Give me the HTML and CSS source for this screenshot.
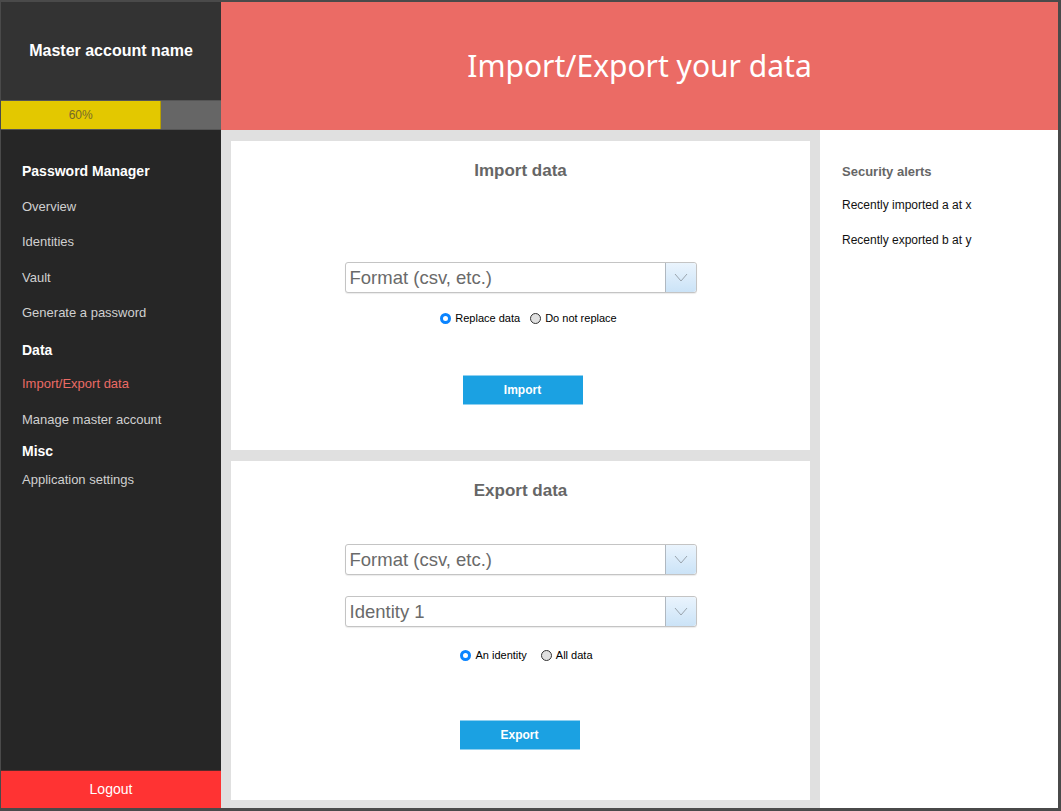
FILE: index.html
```html
<!DOCTYPE html>
<html>
<head>
<meta charset="utf-8">
<link rel="stylesheet" href="styles.css">
</head>
<body>
<div class="app">
  <aside class="sidebar">
    <div class="account">Master account name</div>
    <div class="progress">
      <div class="progress-fill" style="width:72.9%">60%</div>
    </div>
    <nav class="nav">
      <div class="nav-row nav-head">Password Manager</div>
      <div class="nav-row">Overview</div>
      <div class="nav-row">Identities</div>
      <div class="nav-row">Vault</div>
      <div class="nav-row">Generate a password</div>
      <div class="nav-row nav-head nav-data">Data</div>
      <div class="nav-row active">Import/Export data</div>
      <div class="nav-row">Manage master account</div>
      <div class="nav-row nav-head nav-short">Misc</div>
      <div class="nav-row nav-last">Application settings</div>
    </nav>
    <div class="logout">Logout</div>
  </aside>
  <div class="content">
    <header class="header">Import/Export your data</header>
    <div class="body">
      <main class="cards">
        <section class="card card-import">
          <h2 class="card-title">Import data</h2>
          <div class="select sel-import">
            <span class="select-text">Format (csv, etc.)</span>
            <span class="select-btn"><svg width="14" height="9" viewBox="0 0 14 9"><path d="M1 1 L7 8 L13 1" fill="none" stroke="#9aa4ad" stroke-width="1"/></svg></span>
          </div>
          <div class="radios radios-import">
            <label class="radio"><span class="dot on"></span>Replace data</label>
            <label class="radio"><span class="dot"></span>Do not replace</label>
          </div>
          <button class="btn btn-import">Import</button>
        </section>
        <section class="card card-export">
          <h2 class="card-title">Export data</h2>
          <div class="select sel-export1">
            <span class="select-text">Format (csv, etc.)</span>
            <span class="select-btn"><svg width="14" height="9" viewBox="0 0 14 9"><path d="M1 1 L7 8 L13 1" fill="none" stroke="#9aa4ad" stroke-width="1"/></svg></span>
          </div>
          <div class="select sel-export2">
            <span class="select-text">Identity 1</span>
            <span class="select-btn"><svg width="14" height="9" viewBox="0 0 14 9"><path d="M1 1 L7 8 L13 1" fill="none" stroke="#9aa4ad" stroke-width="1"/></svg></span>
          </div>
          <div class="radios radios-export">
            <label class="radio"><span class="dot on"></span>An identity</label>
            <label class="radio"><span class="dot"></span>All data</label>
          </div>
          <button class="btn btn-export">Export</button>
        </section>
      </main>
      <aside class="alerts">
        <h3 class="alerts-title">Security alerts</h3>
        <p class="alert">Recently imported a at x</p>
        <p class="alert">Recently exported b at y</p>
      </aside>
    </div>
  </div>
</div>
</body>
</html>
```

FILE: styles.css
```css
* { box-sizing: border-box; }
html, body { margin: 0; padding: 0; }
body {
  width: 1061px;
  height: 811px;
  overflow: hidden;
  font-family: "Liberation Sans", Arial, sans-serif;
  background: #fff;
}
.app {
  display: flex;
  width: 1061px;
  height: 811px;
  border-top: 2px solid #4a4a4a;
  border-right: 3px solid #4a4a4a;
  border-bottom: 3px solid #4a4a4a;
  border-left: 1px solid #4a4a4a;
}
.sidebar {
  width: 220px;
  flex: none;
  display: flex;
  flex-direction: column;
  background: #262626;
}
.account {
  height: 98px;
  background: #333333;
  color: #fff;
  font-weight: bold;
  font-size: 16px;
  display: flex;
  align-items: center;
  justify-content: center;
  padding-bottom: 0;
}
.progress {
  height: 30px;
  background: #666666;
  border-top: 1px solid #555;
  border-bottom: 1px solid #555;
}
.progress-fill {
  height: 100%;
  background: #e3c800;
  border-right: 1px solid #b8a000;
  color: #756a2a;
  font-size: 12px;
  display: flex;
  align-items: center;
  justify-content: center;
}
.nav {
  flex: 1;
  padding-top: 23px;
  padding-left: 21px;
}
.nav-row {
  height: 35.5px;
  display: flex;
  align-items: center;
  font-size: 13px;
  color: #d0d0d0;
}
.nav-head {
  color: #fff;
  font-weight: bold;
  font-size: 14px;
}
.nav-data { padding-top: 3px; }
.nav-short { height: 27.5px; }
.nav-last { height: 30.5px; }
.active { color: #eb6b65; }
.logout {
  height: 38px;
  background: #ff3333;
  color: #fff;
  font-size: 14px;
  display: flex;
  align-items: center;
  justify-content: center;
  border-top: 1px solid #5a2a2a;
  padding-bottom: 2px;
}
.content {
  flex: 1;
  display: flex;
  flex-direction: column;
}
.header {
  height: 128px;
  background: #eb6b65;
  color: #fff;
  font-family: "Noto Sans", "Open Sans", sans-serif;
  font-size: 30px;
  display: flex;
  align-items: center;
  justify-content: center;
  padding-bottom: 2px;
}
.body {
  flex: 1;
  display: flex;
}
.cards {
  width: 599px;
  flex: none;
  background: #e0e0e0;
  padding: 11px 10px 8px 10px;
  display: flex;
  flex-direction: column;
  gap: 11px;
}
.card {
  background: #fff;
  display: flex;
  flex-direction: column;
  align-items: center;
}
.card-import { height: 309px; }
.card-export { flex: 1; }
.card-title {
  margin: 0;
  font-size: 17px;
  font-weight: bold;
  color: #666;
  margin-top: 20px;
  line-height: 20px;
}
.select {
  width: 352px;
  height: 31px;
  border: 1px solid #c4c4c4;
  border-radius: 3px;
  display: flex;
  align-items: center;
  background: #fff;
  box-shadow: 0 1px 1px rgba(0,0,0,0.08);
}
.select-text {
  flex: 1;
  padding-left: 4px;
  font-size: 18.5px;
  color: #6a6a6a;
}
.select-btn {
  width: 31px;
  height: 100%;
  border-left: 1px solid #b0b8c0;
  background: linear-gradient(#eaf4fd, #cbe3f7);
  display: flex;
  align-items: center;
  justify-content: center;
  border-radius: 0 3px 3px 0;
}
.sel-import { margin-top: 81px; }
.sel-export1 { margin-top: 43px; }
.sel-export2 { margin-top: 21px; }
.radios {
  display: flex;
  gap: 10px;
  font-size: 11px;
  color: #000;
}
.radios-import { margin-top: 19px; margin-left: 16px; }
.radios-export { margin-top: 22px; margin-left: 12px; gap: 14px; }
.radio {
  display: flex;
  align-items: center;
  gap: 4px;
}
.dot {
  width: 11px;
  height: 11px;
  border-radius: 50%;
  border: 1px solid #333;
  background: #e0e0e0;
}
.dot.on {
  border: 3px solid #0a84ff;
  background: #fff;
}
.btn {
  width: 120px;
  height: 30px;
  background: #1ba1e2;
  color: #fff;
  border: none;
  border-top: 1px solid #8fd0f0;
  border-bottom: 1px solid #8fd0f0;
  font-family: "Liberation Sans", Arial, sans-serif;
  font-weight: bold;
  font-size: 12px;
  padding: 0;
}
.btn-import { margin-top: 51px; margin-left: 4px; }
.btn-export { margin-top: 59px; margin-left: -2px; }
.alerts {
  flex: 1;
  background: #fff;
  padding: 34px 0 0 22px;
}
.alerts-title {
  margin: 0 0 18px;
  font-size: 13px;
  font-weight: bold;
  color: #666;
  line-height: 16px;
}
.alert {
  margin: 0 0 21px;
  font-size: 12px;
  color: #111;
  line-height: 14px;
}
```
